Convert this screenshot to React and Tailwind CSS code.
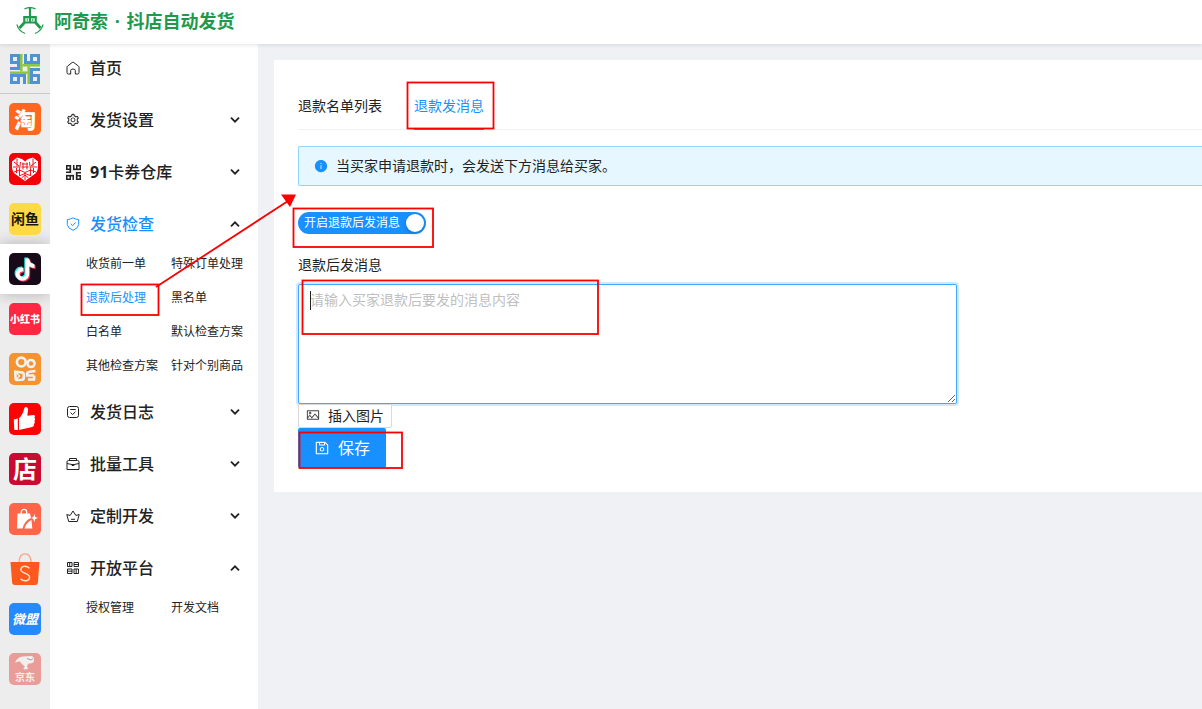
import React from "react";
import {
  AiFillInfoCircle,
  AiOutlinePicture,
  AiOutlineSave,
  AiOutlineSetting,
} from "react-icons/ai";

/* ---------- brand marks ---------- */

function RobotMark() {
  return (
    <svg width="28" height="30" viewBox="0 0 28 30" fill="none" stroke="#1f9a4c" strokeWidth="1.6" aria-hidden="true">
      <path d="M8.500 1.800Q14 -.6 19.500 1.800" strokeWidth="1.300" />
      <path d="M14 1V9" strokeWidth="2.200" />
      <path d="M8.300 10.200h11.400v5.300H8.300zM14 10v5.500" strokeWidth="2.200" />
      <path d="M11.200 11.500v2.700M16.800 11.500v2.700" strokeWidth="1" />
      <path d="M8.500 15.500L3.500 21M19.500 15.500l5 5.500" strokeWidth="2.800" />
      <path d="M1 17.500Q2 23.500 9 26.500M27 17.500Q26 23.500 19 26.500" strokeWidth="1.300" />
    </svg>
  );
}

const quarterTurns = [0, 90, 180, 270];

function MazeMark({ size, blue, green }) {
  return (
    <svg width={size} height={size} viewBox="0 0 30 30" fill="none" aria-hidden="true">
      {quarterTurns.map((turn) => (
        <g key={turn} transform={`rotate(${turn} 15 15)`}>
          <path stroke={blue} strokeWidth="3" d="M15.500 0v8.500h13v-7h-7v7" />
          <path stroke={green} strokeWidth="2.500" d="M12.500 11.300H30" />
        </g>
      ))}
    </svg>
  );
}

function Tile({ color, children }) {
  return (
    <svg width="32" height="32" viewBox="0 0 32 32" aria-hidden="true">
      <rect width="32" height="32" rx="5" fill={color} />
      {children}
    </svg>
  );
}

function TextTile({ className, children }) {
  return (
    <span className={`flex h-8 w-8 items-center justify-center whitespace-nowrap rounded-[5px] leading-8 ${className}`}>
      {children}
    </span>
  );
}

function PddLogo() {
  return (
    <Tile color="#f40009">
      <path d="M16 28L5.500 20.500Q3 18 3 13V8.500L8 4.500L13 6l3 2.500L19 6l5-1.500L29 8.500V13q0 5-2.500 7.500z" fill="#fff" />
      <g stroke="#f40009" strokeWidth=".9" fill="none">
        <path d="M13 11h6M12.500 14h7M14 9.500v7M18 9.500v7M11.500 9l-1 8 5.500 2.500 5.500-2.500-1-8M4 14h6.500M21.500 14H28M8 5.500v8M24 5.500v8M5 9l5 4M27 9l-5 4M5 19l5.500-2M27 19l-5.500-2M10.500 17v6M21.500 17v6M16 19.500V27M7.500 15v5M24.500 15v5M11 22.500l5-2 5 2M12.500 25l3.500-3 3.500 3" />
      </g>
    </Tile>
  );
}

const notePath =
  "M16.500 5.500h3.700c.2 3.200 2.200 5.400 5.300 5.700v3.700c-2 0-3.800-.6-5.300-1.700v7.600c0 4.200-3.100 6.900-6.800 6.900S6.800 24.800 6.800 21.200c0-4 3.300-7 7.600-6.600v3.900c-2.100-.5-3.800.7-3.800 2.600 0 1.700 1.300 2.900 2.900 2.900 1.900 0 3-1.200 3-3.300z";

function DouyinLogo() {
  return (
    <Tile color="#170b1a">
      <path d={notePath} fill="#25f4ee" transform="translate(-1.2 -1)" />
      <path d={notePath} fill="#fe2c55" transform="translate(1 1)" />
      <path d={notePath} fill="#fff" />
    </Tile>
  );
}

function KuaishouLogo() {
  return (
    <Tile color="#f59331">
      <g fill="none" stroke="#f2f2f2" strokeWidth="2.600">
        <circle cx="12.300" cy="9" r="4.400" />
        <circle cx="22" cy="10.500" r="3.500" />
        <path d="M6.300 18.700l7 .8q1.500.3 1.500 2v3q0 2-2 2.200l-5 .3q-1 0-1.200-1z" />
        <path d="M6.500 19l4.200 4-4 3.500" strokeWidth="1.200" />
        <path d="M26.500 18l-6 .7q-2.500.3-2.500 3M17 22.500h8M19 26.500h6l.3-4" />
      </g>
    </Tile>
  );
}

function ThumbLogo() {
  return (
    <Tile color="#fd0303">
      <path d="M4.800 16.500l4-1v11.500H5.300z" fill="#fff" />
      <path d="M10 15.300c2.500-2.300 4.200-5.200 5-9 .6-3.200 4-2.800 4 .5 0 2-.7 4.200-.5 6l6-.8c1.700 0 2 2 .8 2.800 1.200.7 1.200 2.500 0 3.200.8 1 .6 2.500-.5 3 .5 1.300 0 2.600-1.600 3L10 27z" fill="#fff" />
    </Tile>
  );
}

function BagLogo() {
  return (
    <Tile color="#ff6548">
      <path d="M8.500 10.500h12.500L22 15q-6.500 2.500-8.500 10.500H8z" fill="#fff" />
      <path d="M15.500 25.500q1.500-6 7-8.500l.8 8.500z" fill="#fff" />
      <path d="M12.300 11V9a2.700 2.700 0 015.400 0v2" fill="none" stroke="#fff" strokeWidth="1.300" />
      <path d="M25.300 11l1 3 2.700 1-2.700 1-1 3-1-3-2.300-1 2.300-1z" fill="#fff" />
    </Tile>
  );
}

function ShopeeLogo() {
  return (
    <svg width="32" height="34" viewBox="0 0 32 34" aria-hidden="true">
      <path d="M10 10.500C10 4 13 1.800 16 1.800s6 2.200 6 8.700" fill="none" stroke="#f5a48b" strokeWidth="1.300" />
      <path d="M1.500 10h29l-1.600 20.500Q28.700 33 26 33H6q-2.700 0-2.900-2.500z" fill="#fd591d" />
      <path d="M20.500 16.200C16.500 12.800 11.700 14.300 11.900 17.800c.2 4.200 9.200 3 8.700 7.700-.4 3.800-5.600 4.300-9.200 1.200" fill="none" stroke="#ffe4d8" strokeWidth="1.400" />
    </svg>
  );
}

function JdLogo() {
  return (
    <span className="relative flex h-8 w-8 items-end justify-center rounded-[5px] bg-[#ea9d98]">
      <svg className="absolute inset-0" width="32" height="32" viewBox="0 0 32 32" aria-hidden="true">
        <path d="M6 10q2-6 8-6.500L22 3q3 .3 3 4 0 4-5.500 3.500L18 13l1 3-4 .5-.5-1.500 1.500-1.500Q12.500 11.500 11 8.500q-3-.5-5 1.500z" fill="#f3efef" />
        <path d="M18 5.500l4 1.500 2-1.500" stroke="#8f7774" strokeWidth=".7" fill="none" />
      </svg>
      <span className="relative pb-0.5 text-[10px] font-bold leading-3 text-[#f6eeee]">京东</span>
    </span>
  );
}

const platforms = [
  { name: "淘宝", logo: <TextTile className="bg-[#ff6720] text-[22px] font-black text-white">淘</TextTile> },
  { name: "拼多多", logo: <PddLogo /> },
  { name: "闲鱼", logo: <TextTile className="bg-[#ffda44] text-[14px] font-bold text-[#1a1708]">闲鱼</TextTile> },
  { name: "抖店", logo: <DouyinLogo />, active: true },
  { name: "小红书", logo: <TextTile className="bg-[#ff2741] text-[10px] font-black text-white">小红书</TextTile> },
  { name: "快手", logo: <KuaishouLogo /> },
  { name: "点赞", logo: <ThumbLogo /> },
  { name: "微店", logo: <TextTile className="bg-[#c90b31] text-[24px] font-bold text-white">店</TextTile> },
  { name: "购物袋", logo: <BagLogo /> },
  { name: "Shopee", logo: <ShopeeLogo /> },
  { name: "微盟", logo: <TextTile className="bg-[#2589ff] text-[13px] font-bold italic text-white">微盟</TextTile> },
  { name: "京东", logo: <JdLogo /> },
];

/* ---------- menu icons ---------- */

function LineIcon({ children }) {
  return (
    <svg width="14" height="14" viewBox="0 0 14 14" fill="none" stroke="currentColor" strokeWidth="1" aria-hidden="true">
      {children}
    </svg>
  );
}

const icons = {
  home: (
    <LineIcon>
      <path d="M2.500 13Q1 13 1 11.500V6.300Q1 5.500 1.700 5L6.200 1.500q.8-.6 1.600 0L12.300 5q.7.500.7 1.300v5.200q0 1.500-1.500 1.500H9.300V9.500Q9.300 8 7 8T4.700 9.500V13z" />
    </LineIcon>
  ),
  setting: <AiOutlineSetting size={14} />,
  maze: <MazeMark size={15} blue="#222" green="#ddd" />,
  shield: (
    <LineIcon>
      <path d="M7 .8Q9.500 2.300 12.700 2.600V7.500Q12.500 11 7 13.300 1.500 11 1.300 7.500V2.600Q4.500 2.300 7 .8zM4.600 6.800l1.900 1.900 3-3.200" />
    </LineIcon>
  ),
  log: (
    <LineIcon>
      <rect x="1.500" y="1.500" width="11" height="11" rx="2" />
      <path d="M4.300 4.500h5.400M4.600 7.600l1.900 1.900 3-2.800" />
    </LineIcon>
  ),
  toolbox: (
    <LineIcon>
      <path d="M3.500 3.500v-2h7v2M2.500 3.500h9q1.500 0 1.500 1.500v7.500H1V5q0-1.500 1.500-1.500zM1 6.500q6 2.500 12 0M6 7.500h2v1H6z" />
    </LineIcon>
  ),
  crown: (
    <LineIcon>
      <path d="M2.700 12.500L.8 5.500l3.300 1L7 2l2.900 4.500 3.300-1-1.900 7zM5 10.300h4" />
    </LineIcon>
  ),
  grid: (
    <LineIcon>
      <path d="M1.500 1.500H6v4H1.500zM8 1.500h4.500v4H8zM1.500 8H6v4.500H1.500zM8 8h4.500v4.500H8zM3.700 1.500v4M10.200 8v4.500M8 3.500h4.500M1.500 10.200H6" />
    </LineIcon>
  ),
};

function Chevron({ open }) {
  return (
    <svg width="10" height="10" viewBox="0 0 10 10" fill="none" stroke="#222" strokeWidth="1.800" aria-hidden="true">
      <path d={open ? "M1 7.300l4-4 4 4" : "M1 2.700l4 4 4-4"} />
    </svg>
  );
}

const menu = [
  { label: "首页", icon: "home", leaf: true },
  { label: "发货设置", icon: "setting" },
  { label: <><b>91</b>卡券仓库</>, id: "cards", icon: "maze" },
  {
    label: "发货检查",
    icon: "shield",
    active: true,
    children: ["收货前一单", "特殊订单处理", "退款后处理", "黑名单", "白名单", "默认检查方案", "其他检查方案", "针对个别商品"],
  },
  { label: "发货日志", icon: "log" },
  { label: "批量工具", icon: "toolbox" },
  { label: "定制开发", icon: "crown" },
  { label: "开放平台", icon: "grid", children: ["授权管理", "开发文档"] },
];

function MenuSection({ item }) {
  return (
    <li>
      <button
        type="button"
        aria-expanded={item.leaf ? undefined : Boolean(item.children)}
        className={`flex h-10 w-full items-center pl-4 pr-[18px] text-left text-[16px] font-medium ${item.active ? "text-[#1890ff]" : "text-[#222]"}`}
      >
        <span className="flex w-6 shrink-0 items-center">{icons[item.icon]}</span>
        <span className="flex-1">{item.label}</span>
        {!item.leaf && <Chevron open={Boolean(item.children)} />}
      </button>
      {item.children ? (
        <ul className="mb-[9px] mt-[3px] grid grid-cols-[85px_1fr] pl-9 text-[12px]">
          {item.children.map((child) => (
            <li key={child} className="h-[34px] whitespace-nowrap leading-[34px]">
              <a href="#" className={child === "退款后处理" ? "text-[#1890ff]" : "text-[#222]"}>
                {child}
              </a>
            </li>
          ))}
        </ul>
      ) : (
        <div className="h-3" />
      )}
    </li>
  );
}

/* ---------- red guide marks over the page ---------- */

function Annotations() {
  return (
    <svg className="pointer-events-none absolute inset-0 z-30 h-full w-full" fill="none" stroke="#fb0000" strokeWidth="1.800" aria-hidden="true">
      <rect x="81.500" y="284.500" width="77" height="30.500" />
      <rect x="407.500" y="82.500" width="86" height="46" />
      <rect x="293.500" y="208.500" width="139.500" height="38.500" />
      <rect x="302.500" y="280.500" width="295.500" height="53.500" />
      <rect x="299.500" y="432.500" width="102.500" height="35.500" />
      <path d="M156 287L288 201" />
      <path d="M281 194.500h15l-6 12.500z" fill="#fb0000" stroke="none" />
    </svg>
  );
}

export default function App() {
  return (
    <div className="relative flex min-h-screen flex-col overflow-hidden bg-[#f0f1f5] font-['Open_Sans','Noto_Sans_CJK_SC',sans-serif] text-[14px] text-[#222]">
      <header className="relative z-20 flex h-11 items-center bg-white pl-4 shadow-[0_1px_4px_rgba(0,21,41,0.12)]">
        <RobotMark />
        <h1 className="ml-2.5 pb-0.5 text-[18px] font-bold leading-7 text-[#1f9a4c]">
          阿奇索<span className="mx-0.5"> · </span>抖店自动发货
        </h1>
      </header>

      <div className="flex flex-1">
        <nav aria-label="平台" className="w-[50px] shrink-0 bg-[#ededed]">
          <a href="#" aria-label="91卡券" className="flex h-[50px] items-center justify-center border-b border-[#c8c8c8]">
            <MazeMark size={30} blue="#4f93d2" green="#8cc53f" />
          </a>
          {platforms.map((p) => (
            <a
              key={p.name}
              href="#"
              aria-label={p.name}
              className={`flex h-[50px] items-center justify-center ${p.active ? "bg-white shadow-[0_0_16px_rgba(0,0,0,0.25)]" : ""}`}
            >
              {p.logo}
            </a>
          ))}
        </nav>

        <aside className="relative z-10 w-52 shrink-0 bg-white pt-1">
          <ul>
            {menu.map((item) => (
              <MenuSection key={item.id ?? item.label} item={item} />
            ))}
          </ul>
        </aside>

        <main className="min-w-0 flex-1 pl-4 pt-4">
          <section className="bg-white pb-6 pl-6 pt-[23px]">
            <div role="tablist" className="flex gap-8 border-b border-[#f0f0f0]">
              <button type="button" role="tab" aria-selected="false" className="-mb-px border-b-2 border-transparent pb-[11px] pt-3 leading-[22px]">
                退款名单列表
              </button>
              <button type="button" role="tab" aria-selected="true" className="-mb-px border-b-2 border-[#1890ff] pb-[11px] pt-3 leading-[22px] text-[#1890ff]">
                退款发消息
              </button>
            </div>

            <div role="alert" className="mt-4 flex h-10 items-center gap-2 rounded-l-[2px] border border-r-0 border-[#91d5ff] bg-[#e6f7ff] pb-px pl-[15px]">
              <AiFillInfoCircle size={14} color="#1890ff" />
              <span>当买家申请退款时，会发送下方消息给买家。</span>
            </div>

            <label className="mt-[26px] flex h-[22px] w-32 cursor-pointer items-center justify-between rounded-full bg-[#1890ff] pl-1.5 pr-0.5 text-[12px] text-white">
              <input type="checkbox" role="switch" defaultChecked className="sr-only" />
              <span>开启退款后发消息</span>
              <span className="h-[18px] w-[18px] rounded-full bg-white shadow-[0_2px_4px_rgba(0,35,11,0.2)]" />
            </label>

            <label htmlFor="refund-message" className="mt-5 block w-fit leading-[22px]">
              退款后发消息
            </label>
            <div className="relative mt-2 w-[659px] max-w-full">
              <textarea
                id="refund-message"
                placeholder="请输入买家退款后要发的消息内容"
                className="block h-[120px] w-full resize rounded-[2px] border border-[#40a9ff] bg-white px-[11px] py-1 leading-[22px] shadow-[0_0_0_2px_rgba(24,144,255,0.2)] outline-none placeholder:text-[#bfbfbf]"
              />
              <span className="absolute left-3 top-[7px] h-[19px] w-px bg-[#222]" />
            </div>

            <button type="button" className="relative flex h-6 items-center gap-2 rounded-b-[2px] border border-[#d9d9d9] bg-white px-[7px] pb-0.5">
              <AiOutlinePicture size={14} color="#444" />
              插入图片
            </button>
            <button type="button" className="flex h-10 items-center gap-2 rounded-[2px] bg-[#1890ff] px-4 text-[16px] text-white">
              <AiOutlineSave size={16} />
              保存
            </button>
          </section>
        </main>
      </div>

      <Annotations />
    </div>
  );
}
